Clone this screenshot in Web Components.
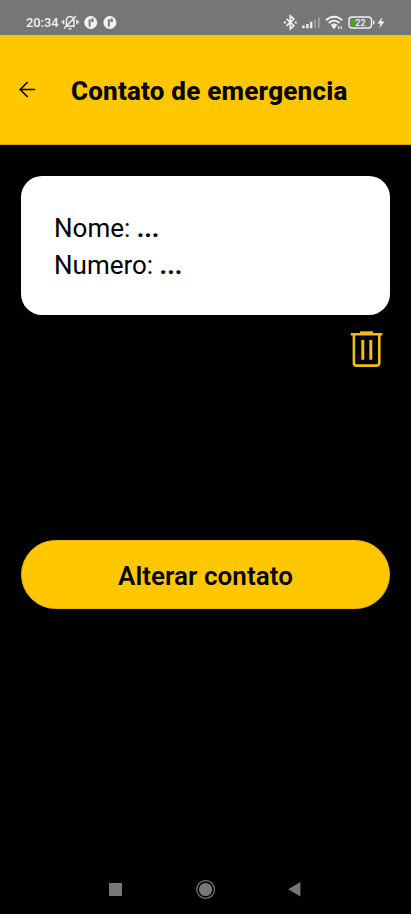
<!DOCTYPE html>
<html lang="pt-BR">
<head>
<meta charset="utf-8">
<title>Contato de emergencia</title>
<style>
html, body { margin: 0; height: 100%; background: #000; }
body { font-family: Roboto, "Liberation Sans", sans-serif; overflow: hidden; }
</style>
</head>
<body>
<emergency-app></emergency-app>
<script>
const define = (name, html) => {
  const t = document.createElement('template');
  t.innerHTML = html;
  customElements.define(name, class extends HTMLElement {
    constructor() {
      super();
      this.attachShadow({ mode: 'open' }).append(t.content.cloneNode(true));
    }
  });
};

define('status-bar', `
<style>
:host { display: flex; justify-content: space-between; box-sizing: border-box; height: 35px; padding-left: 26px; background: #767676; color: #f0f0f0; }
.left { display: flex; }
.time { font-size: 12.8px; line-height: 15px; padding-top: 15px; width: 35px; white-space: nowrap; font-weight: 500; }
svg { display: block; flex: none; }
.lvl { font: 500 9px Roboto, sans-serif; }
</style>
<div class="left"><span class="time">20:34</span>
<svg width="58" height="35" viewBox="61 0 58 35" fill="none" stroke="#ededed" stroke-width="1.5">
<path d="M65.5 26.3h9.5M66.4 26v-5c0-3 1.4-4.4 3.7-4.6 2.4.2 3.8 1.6 3.8 4.6v5M68.5 28.7h3M64 28.6l12-12.6M63.6 19.7v4.6M76.9 19.7v4.6" />
<path d="M62 21v2M78.4 21v2" stroke-width="1"/>
<g stroke="none"><circle cx="90.7" cy="22.5" r="6.5" fill="#f2f2f2"/><circle cx="109.9" cy="22.5" r="6.5" fill="#f2f2f2"/></g>
<path d="M89.6 26.8v-7.6M108.8 26.8v-7.6" stroke="#767676" stroke-width="1.9"/>
<path d="M91.3 18.6h2.3v3.4h-2.3zM110.5 18.6h2.3v3.4h-2.3z" stroke="none" fill="#767676"/>
</svg></div>
<svg width="131" height="35" viewBox="280 0 131 35" fill="none" stroke="#f2f2f2" stroke-width="1.4">
<path d="M286.5 18.9l7.4 6.8-3.6 3.3V15.8l3.6 3.3-7.4 6.7" stroke-width="1.6"/>
<path d="M283.8 21.5h2v2h-2zM294.8 21.5h2v2h-2z" fill="#f2f2f2" stroke="none"/>
<g stroke="none" fill="#eee"><path d="M302.3 25.6h2.4v2.6h-2.4zM306.2 24h2.4v4.2h-2.4zM310 21.8h2.4v6.4H310z"/><path d="M313.9 19.5h2.2v8.7h-2.2zM317.9 17.2h2.2v11h-2.2z" fill="#9c9c9c"/></g>
<path d="M326 20.3c4.8-4.7 11.6-4.7 16.2 0M328.8 23c3.2-3 7.5-3 10.6 0M331.4 25.6c1.7-1.5 3.7-1.5 5.4 0" stroke-width="1.9"/>
<path d="M331.7 26.2l2.3 3 2.4-3c-1.4-1-3.2-1-4.7 0z" fill="#f2f2f2" stroke="none"/>
<path d="M338.7 29v-3M341.1 26v3" stroke-width="1.1"/>
<rect x="349" y="17" width="22.5" height="11" rx="3"/>
<path d="M351 18.7h4.7v7.7H351z" fill="#46a81f" stroke="none"/>
<path d="M373.7 20.6v3.8" stroke-width="1.5"/>
<text class="lvl" x="355.3" y="25.8" fill="#f4f4f4" stroke="none">22</text>
<path d="M382.4 17l-4.9 6.4h3l-1.3 4.8 5.4-6.7h-3.3z" fill="#f2f2f2" stroke="none"/>
</svg>`);

define('app-header', `
<style>
:host { display: flex; box-sizing: border-box; height: 110px; background: #ffc700; padding-left: 18px; color: #080600; border-bottom: 1px solid #d4a600; }
svg { display: block; flex: none; margin-top: 45px; }
h1 { margin: 41px 0 0 33px; font-size: 26px; line-height: 30px; font-weight: 800; white-space: nowrap; letter-spacing: .21px; }
</style>
<svg width="20" height="20" viewBox="0 0 20 20" fill="none" stroke="currentColor" stroke-width="1.6"><path d="M17.2 9.5H2M9.7 2 2.2 9.5l7.5 7.5"/></svg>
<h1><slot></slot></h1>`);

define('contact-card', `
<style>
:host { display: block; box-sizing: border-box; height: 139px; border-radius: 21px; background: #fff; padding: 34px 33px; color: #000; font-size: 26px; line-height: 37px; font-weight: 400; }
</style><slot></slot>`);

define('contact-row', `
<style>
:host { display: block; white-space: nowrap; }
b { font-weight: 700; }
</style><slot name="label"></slot> <b><slot></slot></b>`);

define('delete-button', `
<style>
:host { display: flex; justify-content: flex-end; padding: 15px 6px 0 0; height: 40px; }
</style>
<svg width="34" height="40" viewBox="0.4 0 34 40" fill="none" stroke="#eebd16" stroke-width="2.6">
<path d="M4.3 5v28.3a2.3 2.3 0 0 0 2.3 2.3h20.8a2.3 2.3 0 0 0 2.3-2.3V5"/>
<path d="M1.2 4.2h31.6"/><path d="M10.5 2.6h13" stroke-width="2.6"/>
<path d="M13.2 10v19.7M21.2 10v19.7" stroke-width="3"/>
</svg>`);

define('primary-button', `
<style>
:host { display: block; }
button { display: block; width: 100%; height: 69px; margin: 0; padding: 2px 0 0; border: 1px solid #e9b600; border-radius: 34.5px; background: #ffc700; color: #080600; font: 600 26px/30px Roboto, sans-serif; letter-spacing: .06px; }
</style><button><slot></slot></button>`);

define('nav-bar', `
<style>
:host { display: flex; justify-content: center; height: 49px; }
svg { display: block; }
</style>
<svg width="411" height="49" viewBox="0 0 411 49" fill="#777">
<path d="M109 18h13v13h-13zM288.2 24.3 300.4 17v14.5z"/>
<circle cx="205.6" cy="24.5" r="6.6"/><circle cx="205.6" cy="24.5" r="8.9" fill="none" stroke="#777" stroke-width="1.2"/>
</svg>`);

define('emergency-app', `
<style>
:host { display: flex; flex-direction: column; height: 914px; background: #000; }
main { flex: 1; display: flex; flex-direction: column; padding: 31px 21px 0; }
primary-button { margin-top: 170px; }
</style>
<status-bar></status-bar>
<app-header>Contato de emergencia</app-header>
<main>
<contact-card>
<contact-row><span slot="label">Nome:</span>...</contact-row>
<contact-row><span slot="label">Numero:</span>...</contact-row>
</contact-card>
<delete-button></delete-button>
<primary-button>Alterar contato</primary-button>
</main>
<nav-bar></nav-bar>`);
</script>
</body>
</html>
